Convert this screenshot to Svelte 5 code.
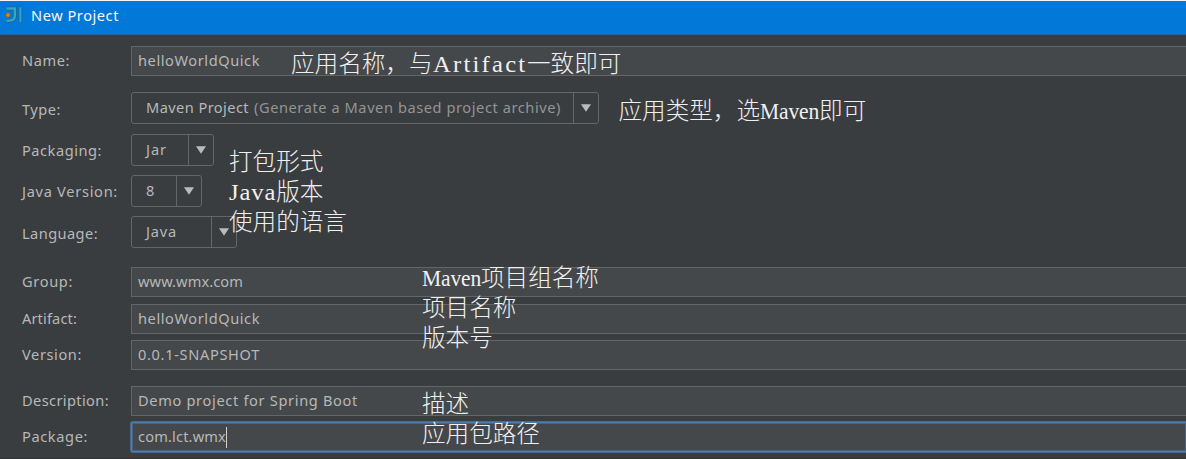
<script>
  const rows = [
    { label: 'Name:', lw: 48, value: 'helloWorldQuick', vw: 122, kind: 'text', gap: 11, dy: 0 },
    { label: 'Type:', lw: 39, value: 'Maven Project', vw: 103, hint: '(Generate a Maven based project archive)', hw: 307, kind: 'select', width: 468, gap: 16, dy: 3 },
    { label: 'Packaging:', lw: 80, value: 'Jar', vw: 21, kind: 'select', width: 83, gap: 10, dy: 2 },
    { label: 'Java Version:', lw: 96, value: '8', vw: 9, kind: 'select', width: 71, gap: 9, dy: 2 },
    { label: 'Language:', lw: 76, value: 'Java', vw: 31, kind: 'select', width: 106, gap: 9, dy: 3 },
    { label: 'Group:', lw: 51, value: 'www.wmx.com', vw: 105, kind: 'text', gap: 19, dy: 0 },
    { label: 'Artifact:', lw: 55, value: 'helloWorldQuick', vw: 122, kind: 'text', gap: 7, dy: 0 },
    { label: 'Version:', lw: 60, value: '0.0.1-SNAPSHOT', vw: 122, kind: 'text', gap: 6, dy: 0 },
    { label: 'Description:', lw: 87, value: 'Demo project for Spring Boot', vw: 220, kind: 'text', gap: 16, dy: 0 },
    { label: 'Package:', lw: 66, value: 'com.lct.wmx', vw: 88, kind: 'text', focus: true, gap: 6, dy: 0 }
  ];

  const notes = [
    { x: 291, y: 46, lines: [['应用名称，与', 'Artifact', '一致即可']] },
    { x: 618.5, y: 93, lines: [['应用类型，选', 'Maven', '即可']] },
    { x: 229, y: 144, lines: [['打包形式'], ['', 'Java', '版本'], ['使用的语言']] },
    { x: 422, y: 260, lines: [['', 'Maven', '项目组名称'], ['项目名称'], ['版本号']] },
    { x: 422, y: 386, lines: [['描述'], ['应用包路径']] }
  ];

  // Tracks the text so that it fills the given width.
  function fit(node, width) {
    const natural = node.getBoundingClientRect().width;
    node.style.letterSpacing = `${(width - natural) / node.textContent.length}px`;
  }

  // Gives Latin words half a CJK cell per letter, partly by widening the glyphs.
  function halfWidth(node, word) {
    const target = word.length * 11.8;
    const natural = node.getBoundingClientRect().width;
    const scale = Math.max(0.98, Math.min(1.12, target / natural));
    const spacing = (target / scale - natural) / word.length;
    node.style.letterSpacing = `${spacing}px`;
    node.style.width = `${target}px`;
    node.style.transform = `scale(${scale}, 1.06)`;
  }
</script>

<div class="window">
  <header>
    <svg class="logo" width="18" height="18" viewBox="0 0 18 18" fill="none">
      <path d="M1.5 2.5H9.8V10Q9.8 15 1.5 15.2" stroke="#17668f" stroke-width="4" />
      <path d="M15.4 .5V17" stroke="#17668f" stroke-width="3.6" />
      <path d="M1.5 2.5H9.8V10Q9.8 15 1.5 15" stroke="#35a5c4" stroke-width="2.4" />
      <path d="M15.4 1.2V16.4" stroke="#35a5c4" stroke-width="2" />
      <circle cx="3" cy="9" r="2.2" fill="#d58a1c" stroke="#6f6636" stroke-width=".7" />
    </svg>
    <span class="title" use:fit={88}>New Project</span>
  </header>

  <main>
    {#each rows as row}
      <div class="row" style:margin-top="{row.gap}px">
        <div class="label" style:padding-top="{row.dy}px"><span use:fit={row.lw}>{row.label}</span></div>
        {#if row.kind === 'text'}
          <div class="input" class:focus={row.focus}>
            <span use:fit={row.vw}>{row.value}</span>
            {#if row.focus}<i class="caret"></i>{/if}
          </div>
        {:else}
          <div class="select" style:width="{row.width}px">
            <div class="choice">
              <span use:fit={row.vw}>{row.value}</span>
              {#if row.hint}<span class="hint" use:fit={row.hw}>{row.hint}</span>{/if}
            </div>
            <div class="arrow">
              <svg width="10" height="8" viewBox="0 0 10 8"><path d="M0 .3H10L5 7.8Z" fill="#bbb" /></svg>
            </div>
          </div>
        {/if}
      </div>
    {/each}
  </main>

  {#each notes as note}
    <div class="note" style:left="{note.x}px" style:top="{note.y}px">
      {#each note.lines as [before, latin, after]}
        <p>{before}{#if latin}<b use:halfWidth={latin}>{latin}</b>{/if}{after ?? ''}</p>
      {/each}
    </div>
  {/each}
</div>

<style>
  :global(body) {
    margin: 0;
    background: #3a3d3f;
  }
  .window {
    position: relative;
    box-sizing: border-box;
    width: 1186px;
    height: 459px;
    overflow: hidden;
    border-top: 1px solid #f4f4f4;
    border-bottom: 1px solid #303234;
    background: #3a3d3f;
    color: #b6b8b9;
    font: 14.6px/20px "Noto Sans", sans-serif;
    white-space: nowrap;
  }
  header {
    box-sizing: border-box;
    display: flex;
    height: 34px;
    padding: 4px 0 0 5px;
    border-bottom: 1px solid #1769ad;
    background: #0279d9;
    color: #f3f8fc;
  }
  .logo {
    flex: none;
    margin-top: 1px;
  }
  .title {
    margin-left: 8px;
  }
  main {
    display: flex;
    flex-direction: column;
  }
  .row {
    display: flex;
  }
  .label {
    flex: none;
    display: flex;
    align-items: center;
    width: 109px;
    padding-left: 22px;
  }
  .label span {
    margin-bottom: 2px;
  }
  .input {
    box-sizing: border-box;
    display: flex;
    align-items: center;
    flex: 1;
    height: 30px;
    padding: 0 0 0 6px;
    border: 1px solid #636566;
    border-right: 0;
    background: #45484a;
  }
  .input span {
    margin-bottom: 2px;
  }
  .focus {
    border-color: #4f7caa;
    border-radius: 2px 0 0 2px;
    box-shadow: 0 0 0 1px #466b91, inset 0 0 0 1px #466482;
  }
  .caret {
    width: 1px;
    height: 21px;
    background: #d0d0d0;
  }
  .select {
    box-sizing: border-box;
    display: flex;
    height: 32px;
    border: 1px solid #646667;
    border-radius: 3px;
  }
  .choice {
    display: flex;
    flex: 1;
    gap: 5px;
    align-items: center;
    padding: 0 0 2px 14px;
  }
  .hint {
    color: #929495;
  }
  .arrow {
    box-sizing: border-box;
    display: flex;
    width: 25px;
    align-items: center;
    justify-content: center;
    border-left: 1px solid #646667;
  }
  .note {
    position: absolute;
    color: #f0f0f0;
    font: 300 23.6px/30px "Noto Sans CJK SC", sans-serif;
  }
  .note p {
    height: 30px;
    margin: 0;
  }
  .note b {
    display: inline-block;
    transform-origin: left center;
    font: 400 22px/20px "Liberation Serif", serif;
  }
</style>
